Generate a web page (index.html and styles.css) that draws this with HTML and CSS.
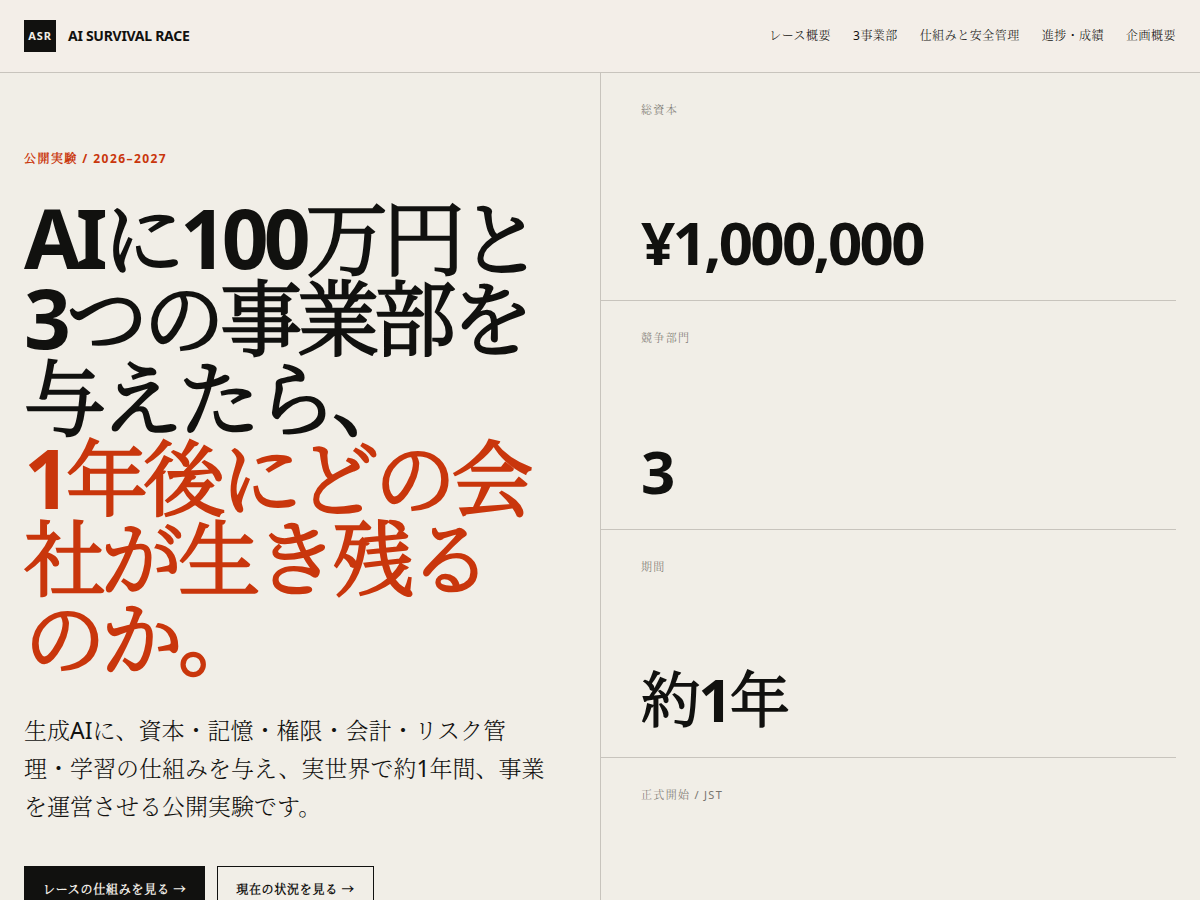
FILE: index.html
```html
<!DOCTYPE html>
<html lang="ja">
<head>
  <meta charset="UTF-8">
  <meta name="viewport" content="width=device-width, initial-scale=1">
  <title>AI SURVIVAL RACE</title>
  <link rel="stylesheet" href="styles.css">
</head>
<body>

<header class="site-header">
  <a class="brand" href="#top">
    <span class="brand-mark">ASR</span>
    <span class="brand-name">AI SURVIVAL RACE</span>
  </a>
  <nav class="site-nav">
    <a href="#race">レース概要</a>
    <a href="#divisions">3事業部</a>
    <a href="#system">仕組みと安全管理</a>
    <a href="#progress">進捗・成績</a>
    <a href="#about">企画概要</a>
  </nav>
</header>

<main class="hero" id="top">
  <section class="hero-main">
    <p class="eyebrow">公開実験 / 2026–2027</p>
    <h1>AIに100万円と<br>3つの事業部を<br>与えたら、<br><span class="accent">1年後にどの会社が生き残るのか。</span></h1>
    <p class="lead">生成AIに、資本・記憶・権限・会計・リスク管理・学習の仕組みを与え、実世界で約1年間、事業を運営させる公開実験です。</p>
    <div class="actions">
      <a class="button button-dark" href="#system">レースの仕組みを見る →</a>
      <a class="button" href="#progress">現在の状況を見る →</a>
    </div>
  </section>

  <dl class="stats">
    <div class="stat">
      <dt>総資本</dt>
      <dd>¥1,000,000</dd>
    </div>
    <div class="stat">
      <dt>競争部門</dt>
      <dd>3</dd>
    </div>
    <div class="stat">
      <dt>期間</dt>
      <dd>約1年</dd>
    </div>
    <div class="stat">
      <dt>正式開始 / JST</dt>
      <dd></dd>
    </div>
  </dl>
</main>

</body>
</html>
```

FILE: styles.css
```css
:root {
  --ink: #11110f;
  --paper: #f1eee7;
  --line: #c8c4bd;
  --muted: #77746d;
  --accent: #c9360c;
}

* { box-sizing: border-box; }

body {
  margin: 0;
  background: var(--paper);
  color: var(--ink);
  font-family: "Noto Sans", "Noto Serif CJK JP Light", "Noto Serif CJK JP", "Noto Sans CJK JP", sans-serif;
  line-height: 1.6;
}

a {
  color: inherit;
  text-decoration: none;
}

.site-header {
  display: flex;
  align-items: center;
  justify-content: space-between;
  padding: 20px 24px;
  background: #f3eee8;
  border-bottom: 1px solid var(--line);
}

.brand {
  display: flex;
  align-items: center;
  gap: 12px;
  font-weight: 700;
}

.brand-mark {
  display: grid;
  place-items: center;
  width: 32px;
  height: 32px;
  background: var(--ink);
  color: var(--paper);
  font-size: 11px;
  letter-spacing: 0.08em;
}

.brand-name {
  font-size: 14px;
  letter-spacing: -0.02em;
}

.site-nav {
  display: flex;
  gap: 22px;
  font-size: 12px;
  letter-spacing: 0.04em;
}

.hero {
  display: grid;
  grid-template-columns: 1fr 1fr;
  padding: 0 24px;
}

.hero-main {
  padding: 76px 52px 73px 0;
}

.eyebrow {
  margin: 0 0 29px;
  color: var(--accent);
  font-size: 12px;
  font-weight: 700;
  letter-spacing: 0.12em;
}

h1 {
  margin: 0;
  font-size: 82px;
  line-height: 80px;
  letter-spacing: -0.06em;
}

.accent { color: var(--accent); }

.lead {
  margin: 34px 0 41px;
  font-size: 23px;
  line-height: 38px;
}

.actions {
  display: flex;
  gap: 12px;
}

.button {
  padding: 13px 18px;
  border: 1px solid var(--ink);
  font-size: 12px;
  font-weight: 700;
  letter-spacing: 0.06em;
}

.button-dark {
  background: var(--ink);
  color: var(--paper);
}

.stats {
  display: grid;
  grid-template-rows: repeat(4, 1fr);
  margin: 0;
  border-left: 1px solid var(--line);
}

.stat {
  display: flex;
  flex-direction: column;
  justify-content: space-between;
  padding: 28px 40px;
  border-bottom: 1px solid var(--line);
}

.stat:last-child { border-bottom: 0; }

.stat dt {
  color: var(--muted);
  font-size: 11px;
  letter-spacing: 0.12em;
}

.stat dd {
  margin: 0;
  font-size: 60px;
  font-weight: 700;
  line-height: 1;
  letter-spacing: -0.045em;
}
```
